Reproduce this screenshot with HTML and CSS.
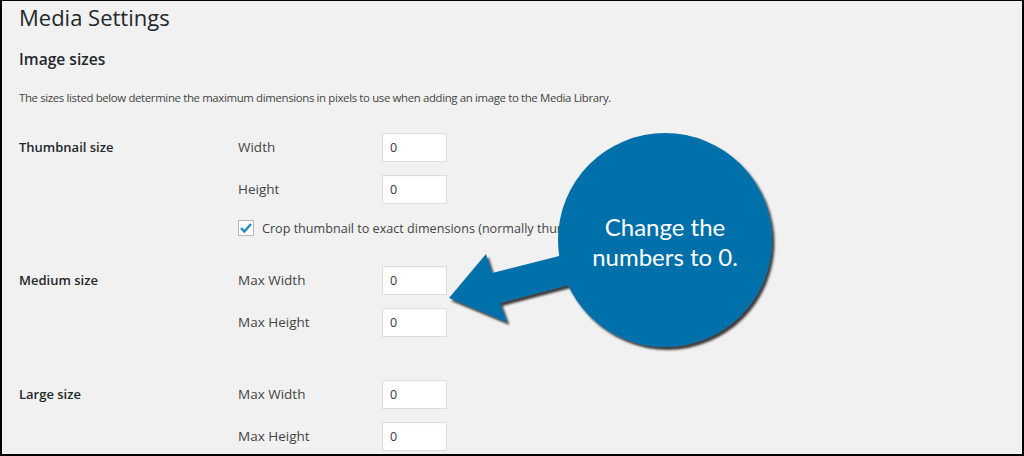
FILE: index.html
```html
<!DOCTYPE html>
<html lang="en">
<head>
    <meta charset="UTF-8">
    <title>Media Settings</title>
    <link rel="stylesheet" href="styles.css">
</head>
<body>
    <div class="frame">
        <h1>Media Settings</h1>
        <h2>Image sizes</h2>
        <p class="intro">The sizes listed below determine the maximum dimensions in pixels to use when adding an image to the Media Library.</p>

        <div class="size-group thumb">
            <div class="size-name">Thumbnail size</div>
            <div class="size-fields">
                <div class="field"><label>Width</label><input type="text" value="0"></div>
                <div class="field"><label>Height</label><input type="text" value="0"></div>
                <div class="check-row">
                    <span class="checkbox">
                        <svg width="14" height="14" viewBox="0 0 14 14"><path d="M2 7.2 L5.4 10.5 L12 3" fill="none" stroke="#1e8cbe" stroke-width="2.4"/></svg>
                    </span>
                    <span>Crop thumbnail to exact dimensions (normally thumbnails are proportional)</span>
                </div>
            </div>
        </div>

        <div class="size-group medium">
            <div class="size-name">Medium size</div>
            <div class="size-fields">
                <div class="field"><label>Max Width</label><input type="text" value="0"></div>
                <div class="field"><label>Max Height</label><input type="text" value="0"></div>
            </div>
        </div>

        <div class="size-group">
            <div class="size-name">Large size</div>
            <div class="size-fields">
                <div class="field"><label>Max Width</label><input type="text" value="0"></div>
                <div class="field"><label>Max Height</label><input type="text" value="0"></div>
            </div>
        </div>

        <!-- annotation bubble drawn over the form -->
        <svg class="callout-shape" width="1024" height="456" viewBox="0 0 1024 456">
            <defs>
                <filter id="shade" x="-10%" y="-10%" width="130%" height="130%">
                    <feDropShadow dx="2.5" dy="3" stdDeviation="1.2" flood-color="#000" flood-opacity="0.75"/>
                </filter>
            </defs>
            <g filter="url(#shade)" fill="#0070aa">
                <polygon points="449,298 486,254 492,273 575,252 580,282 500,303 507,322"/>
                <circle cx="665" cy="240" r="107"/>
            </g>
        </svg>
        <div class="callout-text">Change the<br>numbers to 0.</div>
    </div>
</body>
</html>
```

FILE: styles.css
```css
body {
    margin: 0;
    background-color: #000;
}

.frame {
    position: relative;
    height: 453px;
    overflow: hidden;
    margin: 1px 2px 0 2px;
    padding-left: 17px;
    background-color: #f1f1f1;
    color: #444;
    font-family: "Open Sans", "Liberation Sans", sans-serif;
    font-size: 13.5px;
}

h1 {
    margin: 0;
    padding-top: 1px;
    font-size: 22px;
    font-weight: 400;
    line-height: 30px;
    color: #23282d;
}

h2 {
    margin: 17px 0 0 0;
    font-size: 15.6px;
    font-weight: 600;
    line-height: 20px;
    color: #23282d;
}

.intro {
    margin: 20px 0 0 0;
    font-size: 11.4px;
    letter-spacing: -0.35px;
    line-height: 18px;
}

.size-group {
    display: flex;
    margin-top: 26px;
}

.size-group.medium {
    margin-bottom: 30px;
}

.size-group.thumb {
    margin-bottom: 19px;
}

.size-name {
    width: 219px;
    line-height: 28px;
    font-size: 13px;
    font-weight: 600;
    color: #23282d;
}

.field {
    display: flex;
    align-items: center;
    height: 28px;
    margin-bottom: 14px;
}

.field label {
    width: 144px;
}

.field input {
    box-sizing: border-box;
    width: 65px;
    height: 29px;
    padding: 0 7px;
    border: 1px solid #ddd;
    background-color: #fff;
    color: #32373c;
    font-family: inherit;
    font-size: 12.5px;
    box-shadow: inset 0 1px 2px rgba(0, 0, 0, 0.04);
}

.check-row {
    display: flex;
    align-items: center;
    gap: 8px;
    margin-top: -1px;
    height: 24px;
    font-size: 12.6px;
    white-space: nowrap;
}

.checkbox {
    box-sizing: border-box;
    display: flex;
    align-items: center;
    justify-content: center;
    width: 16px;
    height: 16px;
    border: 1px solid #b4b9be;
    background-color: #fff;
}

.callout-shape {
    position: absolute;
    top: -1px;
    left: -2px;
}

.callout-text {
    position: absolute;
    left: 556px;
    top: 211px;
    width: 214px;
    text-align: center;
    color: #fff;
    font-family: Lato, "Open Sans", sans-serif;
    font-size: 24px;
    line-height: 30px;
}
```
